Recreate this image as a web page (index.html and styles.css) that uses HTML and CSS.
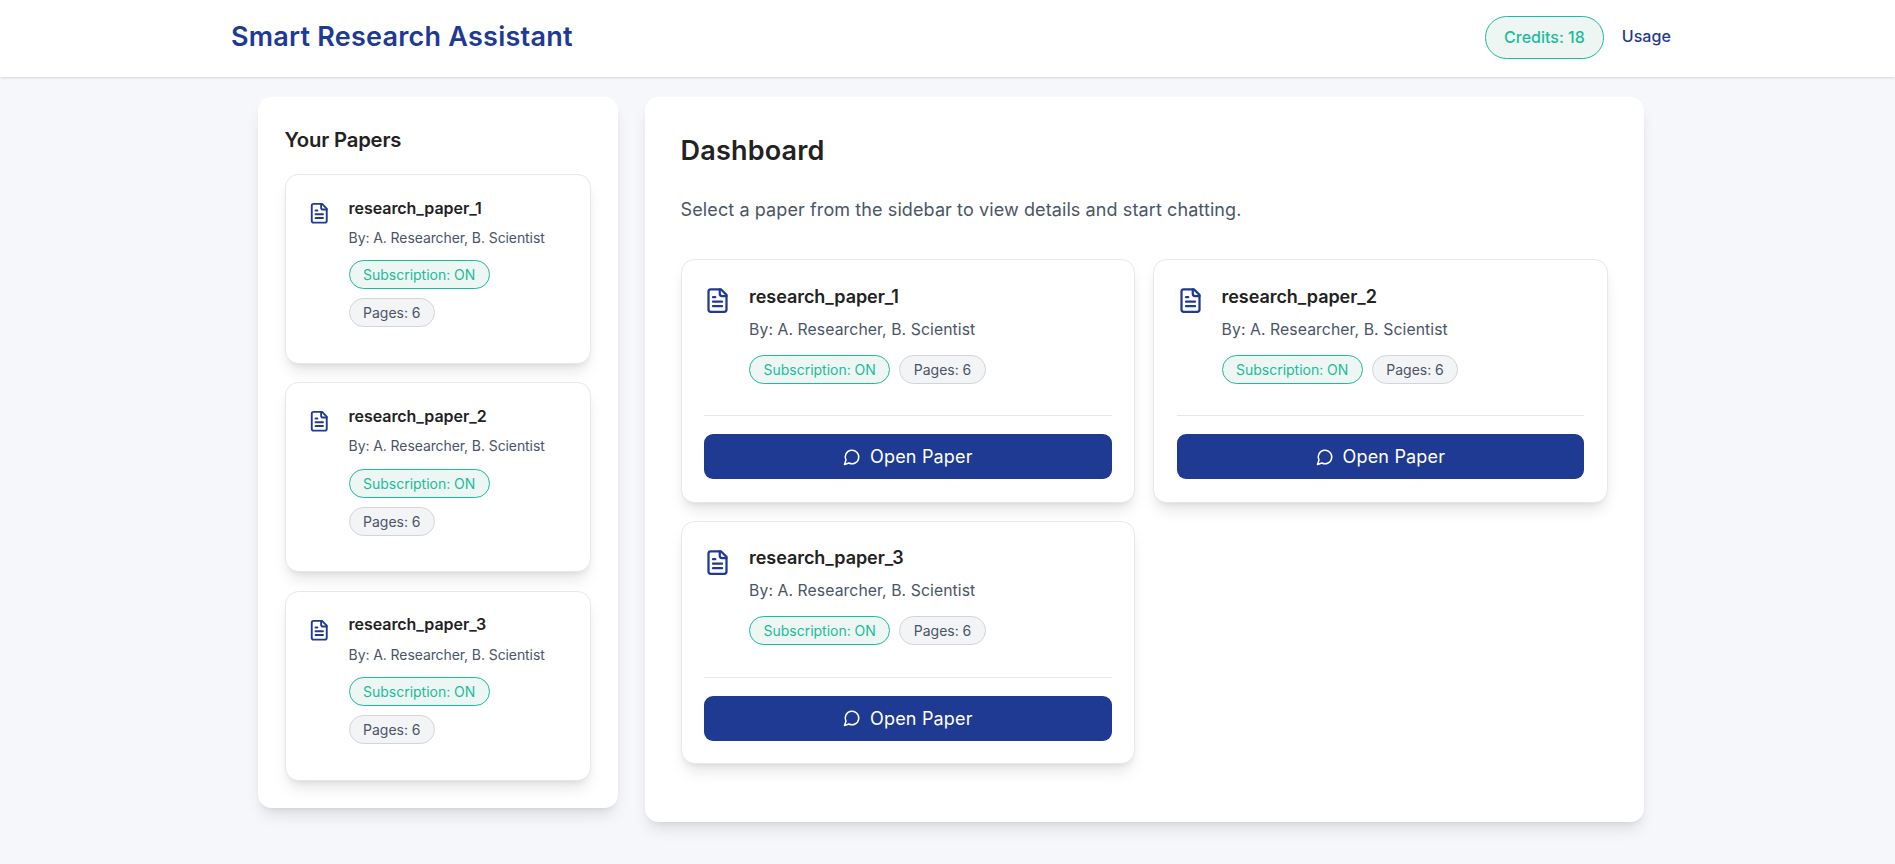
FILE: index.html
```html
<!DOCTYPE html>
<html lang="en">
<head>
<meta charset="utf-8">
<title>Smart Research Assistant</title>
<link rel="stylesheet" href="styles.css">
</head>
<body>
<svg width="0" height="0" class="sprite" aria-hidden="true">
  <symbol id="file" viewBox="0 0 24 24"><path d="M15 2H6a2 2 0 0 0-2 2v16a2 2 0 0 0 2 2h12a2 2 0 0 0 2-2V7Z"/><path d="M14 2v4a2 2 0 0 0 2 2h4"/><path d="M10 9H8"/><path d="M16 13H8"/><path d="M16 17H8"/></symbol>
  <symbol id="chat" viewBox="0 0 24 24"><path d="M7.9 20A9 9 0 1 0 4 16.1L2 22Z"/></symbol>
</svg>
<header class="header">
  <div class="header-inner">
    <h1 class="brand">Smart Research Assistant</h1>
    <nav class="nav"><span class="credits">Credits: 18</span><a class="usage">Usage</a></nav>
  </div>
</header>
<main class="layout">
  <aside class="sidebar">
    <h2 class="sidebar-title">Your Papers</h2>
    <div class="paper-list">
      <article class="card small"><div class="info"><svg class="icon"><use href="#file"/></svg><div class="text"><h3 class="name">research_paper_1</h3><p class="authors">By: A. Researcher, B. Scientist</p><div class="tags"><span class="tag on">Subscription: ON</span><span class="tag">Pages: 6</span></div></div></div></article>
      <article class="card small"><div class="info"><svg class="icon"><use href="#file"/></svg><div class="text"><h3 class="name">research_paper_2</h3><p class="authors">By: A. Researcher, B. Scientist</p><div class="tags"><span class="tag on">Subscription: ON</span><span class="tag">Pages: 6</span></div></div></div></article>
      <article class="card small"><div class="info"><svg class="icon"><use href="#file"/></svg><div class="text"><h3 class="name">research_paper_3</h3><p class="authors">By: A. Researcher, B. Scientist</p><div class="tags"><span class="tag on">Subscription: ON</span><span class="tag">Pages: 6</span></div></div></div></article>
    </div>
  </aside>
  <section class="panel">
    <h2 class="panel-title">Dashboard</h2>
    <p class="lead">Select a paper from the sidebar to view details and start chatting.</p>
    <div class="grid">
      <article class="card"><div class="info"><svg class="icon"><use href="#file"/></svg><div class="text"><h3 class="name">research_paper_1</h3><p class="authors">By: A. Researcher, B. Scientist</p><div class="tags"><span class="tag on">Subscription: ON</span><span class="tag">Pages: 6</span></div></div></div><div class="action"><button class="open"><svg class="chat"><use href="#chat"/></svg><span>Open Paper</span></button></div></article>
      <article class="card"><div class="info"><svg class="icon"><use href="#file"/></svg><div class="text"><h3 class="name">research_paper_2</h3><p class="authors">By: A. Researcher, B. Scientist</p><div class="tags"><span class="tag on">Subscription: ON</span><span class="tag">Pages: 6</span></div></div></div><div class="action"><button class="open"><svg class="chat"><use href="#chat"/></svg><span>Open Paper</span></button></div></article>
      <article class="card"><div class="info"><svg class="icon"><use href="#file"/></svg><div class="text"><h3 class="name">research_paper_3</h3><p class="authors">By: A. Researcher, B. Scientist</p><div class="tags"><span class="tag on">Subscription: ON</span><span class="tag">Pages: 6</span></div></div></div><div class="action"><button class="open"><svg class="chat"><use href="#chat"/></svg><span>Open Paper</span></button></div></article>
    </div>
  </section>
</main>
</body>
</html>
```
FILE: styles.css
```css
html { font-size: 18px; }
* { box-sizing: border-box; }
body { margin: 0; height: 864px; overflow: hidden; background: #f5f7fb; color: #222; font-family: Inter, sans-serif; letter-spacing: 0.18px; }
h1, h2, h3, p { margin: 0; }
.sprite { position: absolute; }
.header { height: 77px; padding-left: 7px; background: #fff; box-shadow: 0 1px 3px rgba(0,0,0,.1), 0 1px 2px -1px rgba(0,0,0,.1); }
.header-inner { width: 1440px; margin: 0 auto; padding-top: 16px; display: flex; justify-content: space-between; align-items: flex-start; }
.brand { font-size: 27px; line-height: 41px; font-weight: 600; color: #1f3a93; letter-spacing: .23px; }
.nav { display: flex; align-items: flex-start; gap: 18px; font-size: 16px; font-weight: 500; line-height: 41px; letter-spacing: .08px; }
.credits { height: 43px; padding: 0 18px; border: 1px solid #1abc9c; border-radius: 22px; background: #eef6f3; color: #1abc9c; line-height: 40px; letter-spacing: 0; }
.usage { color: #1f3a93; }
.layout { width: 1392.2px; margin: 20px auto 0; padding-left: 6.2px; display: flex; align-items: flex-start; gap: 27px; }
.sidebar, .panel, .card { background: #fff; border-radius: 13.5px; box-shadow: 0 10px 15px -3px rgba(0,0,0,.1), 0 4px 6px -4px rgba(0,0,0,.1); }
.sidebar { width: 360px; height: 711px; padding: 27px; flex: none; }
.sidebar-title { height: 50.3px; font-size: 20.25px; line-height: 32px; font-weight: 600; letter-spacing: -.18px; }
.paper-list { display: grid; gap: 18.15px; }
.panel { flex: 1; height: 725.4px; padding: 36px; }
.panel-title { font-size: 27px; line-height: 36px; font-weight: 600; }
.lead { margin-top: 25px; font-size: 18px; line-height: 32px; color: #4a5568; letter-spacing: .1px; }
.grid { margin-top: 33.4px; display: grid; grid-template-columns: 1fr 1fr; gap: 18px; }
.card { height: 243.5px; padding: 22.5px; border: 1px solid #e5e7eb; }
.card.small { height: 190px; }
.info { display: flex; gap: 18px; }
.icon { width: 27px; height: 27px; margin-top: 4.5px; flex: none; fill: none; stroke: #1f3a93; stroke-width: 2; stroke-linecap: round; stroke-linejoin: round; }
.small .icon { width: 22.5px; height: 22.5px; }
.name { font-size: 18px; line-height: 28px; font-weight: 600; letter-spacing: -.06px; }
.small .name { font-size: 16px; line-height: 20px; letter-spacing: -.05px; }
.authors { margin-top: 5px; font-size: 15.75px; line-height: 28px; color: #4a5568; letter-spacing: .08px; }
.small .authors { font-size: 14px; line-height: 24px; margin-top: 8.5px; letter-spacing: -.09px; }
.tags { display: flex; flex-wrap: wrap; gap: 9px; margin-top: 11px; }
.small .tags { margin-top: 10.1px; }
.tag { height: 29px; padding: 0 13.5px; border: 1px solid #d1d5db; border-radius: 15px; background: #f3f4f6; color: #4a5568; font-size: 14px; line-height: 27px; letter-spacing: -.02px; }
.tag.on { border-color: #1abc9c; background: #eef6f3; color: #1abc9c; }
.action { margin-top: 31.2px; padding-top: 18px; border-top: 1px solid #e5e7eb; }
.open { width: 100%; height: 45px; display: flex; align-items: center; justify-content: center; gap: 9px; padding: 0; border: 0; border-radius: 9px; background: #1f3a93; color: #fff; font: 400 18px/27px Inter, sans-serif; letter-spacing: .18px; }
.chat { width: 18px; height: 18px; fill: none; stroke: currentColor; stroke-width: 2; stroke-linecap: round; stroke-linejoin: round; }
```
